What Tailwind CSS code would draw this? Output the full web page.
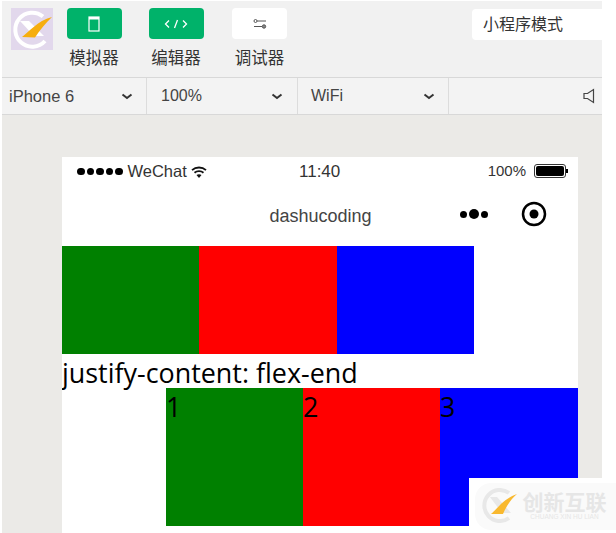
<!DOCTYPE html>
<html>
<head>
<meta charset="utf-8">
<script src="https://cdn.jsdelivr.net/npm/@tailwindcss/browser@4"></script>
</head>
<body class="bg-white">
<div class="relative w-[616px] h-[533px] overflow-hidden bg-white font-['Liberation_Sans','Noto_Sans_CJK_SC',sans-serif]">
  <div class="ml-[2px] mt-[1px] w-[600px] h-[532px] bg-[#ebeae7] flex flex-col">
    <!-- toolbar -->
    <div class="h-[76px] bg-[#f1f1f1] flex items-start shrink-0">
      <div class="ml-[9px] mt-[7px] w-[42px] h-[42px] bg-[#e2d8ec] flex items-center justify-center">
        <svg width="42" height="42" viewBox="0 0 42 42"><path d="M32 8.500 A17 17 0 1 0 34 33" fill="none" stroke="#fff" stroke-width="4"/><path d="M9 13 L18 13 L33 28 L23 28 Z" fill="#fff"/><path d="M11 29 C18 24 26 13 41 9 C34 16 29 22 24 29.500 Z" fill="#f6ae0f"/></svg>
      </div>
      <div class="ml-[13px] mt-[7px] w-[56px] flex flex-col items-center">
        <div class="w-[55px] h-[31px] rounded-[4px] bg-[#00b26a] flex items-center justify-center">
          <svg width="12" height="16" viewBox="0 0 12 16" fill="none"><rect x="1" y="1" width="10" height="14" stroke="#fff" stroke-width="1.200"/><rect x="1" y="1" width="10" height="2.500" fill="#fff"/></svg>
        </div>
        <span class="mt-[7px] text-[16.500px] leading-[24px] text-[#333] whitespace-nowrap">模拟器</span>
      </div>
      <div class="ml-[26px] mt-[7px] w-[56px] flex flex-col items-center">
        <div class="w-[55px] h-[31px] rounded-[4px] bg-[#00b26a] flex items-center justify-center">
          <svg width="24" height="12" viewBox="0 0 24 12" fill="none" stroke="#fff" stroke-width="1.300"><path d="M5 2.500 L1.500 6 L5 9.500"/><path d="M10.500 10 L13.500 2"/><path d="M19 2.500 L22.500 6 L19 9.500"/></svg>
        </div>
        <span class="mt-[7px] text-[16.500px] leading-[24px] text-[#333] whitespace-nowrap">编辑器</span>
      </div>
      <div class="ml-[28px] mt-[7px] w-[55px] flex flex-col items-center">
        <div class="w-[55px] h-[31px] rounded-[4px] bg-white flex items-center justify-center">
          <svg width="14" height="12" viewBox="0 0 14 12" fill="none" stroke="#555" stroke-width="1"><path d="M4 3 H13"/><circle cx="2.500" cy="3" r="1.500"/><path d="M1 8.500 H9"/><circle cx="11" cy="8.500" r="1.700" fill="#888"/></svg>
        </div>
        <span class="mt-[7px] text-[16.500px] leading-[24px] text-[#333] whitespace-nowrap">调试器</span>
      </div>
      <div class="ml-auto mt-[8px] w-[130px] h-[31px] bg-white rounded-l-[4px] pl-[11px] flex items-center text-[16px] text-[#333]">小程序模式</div>
    </div>
    <!-- device bar -->
    <div class="h-[38px] bg-[#f3f3f3] border-t-[1px] border-b-[1px] border-[#d8d8d8] flex items-center text-[16px] text-[#444] shrink-0">
      <div class="w-[145px] h-full border-r-[1px] border-[#dcdcdc] flex items-center justify-between pl-[7px] pr-[13px]">
        <span class="text-[16.500px]">iPhone 6</span>
        <svg width="12" height="7" viewBox="0 0 12 7" fill="none" stroke="#333" stroke-width="2"><path d="M1.500 1.500 L6 5 L10.500 1.500"/></svg>
      </div>
      <div class="w-[151px] h-full border-r-[1px] border-[#dcdcdc] flex items-center justify-between pl-[14px] pr-[14px]">
        <span>100%</span>
        <svg width="12" height="7" viewBox="0 0 12 7" fill="none" stroke="#333" stroke-width="2"><path d="M1.500 1.500 L6 5 L10.500 1.500"/></svg>
      </div>
      <div class="w-[151px] h-full border-r-[1px] border-[#dcdcdc] flex items-center justify-between pl-[13px] pr-[13px]">
        <span>WiFi</span>
        <svg width="12" height="7" viewBox="0 0 12 7" fill="none" stroke="#333" stroke-width="2"><path d="M1.500 1.500 L6 5 L10.500 1.500"/></svg>
      </div>
      <div class="flex-1 h-full flex items-center justify-end pr-[7px]">
        <svg width="12" height="16" viewBox="0 0 12 16" fill="none" stroke="#444" stroke-width="1.200"><path d="M1 5.500 H4.500 L10.500 1.500 V14.500 L4.500 10.500 H1 Z"/></svg>
      </div>
    </div>
    <!-- phone -->
    <div class="ml-[60px] mt-[42px] w-[516px] flex-1 bg-white flex flex-col overflow-hidden">
      <div class="h-[28px] shrink-0 flex items-center justify-between relative pl-[15px] pr-[10px] text-[#333] text-[16px]">
        <div class="flex items-center">
          <span class="flex gap-[2px] mr-[5px] mt-[1px]">
            <i class="w-[7.500px] h-[7.500px] rounded-full bg-black block"></i><i class="w-[7.500px] h-[7.500px] rounded-full bg-black block"></i><i class="w-[7.500px] h-[7.500px] rounded-full bg-black block"></i><i class="w-[7.500px] h-[7.500px] rounded-full bg-black block"></i><i class="w-[7.500px] h-[7.500px] rounded-full bg-black block"></i>
          </span>
          <span class="text-[16.500px] leading-[20px]">WeChat</span>
          <svg class="ml-[4px] mt-[2px]" width="16" height="12" viewBox="0 0 16 12" fill="none" stroke="#111" stroke-width="1.800"><path d="M1 4.200 C5 .6 11 .6 15 4.200"/><path d="M3.500 6.800 C6 4.600 10 4.600 12.500 6.800"/><path d="M8 12 L5.500 9 C7 8 9 8 10.500 9 Z" fill="#111" stroke="none"/></svg>
        </div>
        <span class="absolute left-[237px] mt-[1px] text-[17px]">11:40</span>
        <div class="flex items-center text-[15px]">
          <span class="mr-[1px]">100%</span>
          <span class="ml-[7px] w-[32px] h-[14px] rounded-[3px] border-[1px] border-[#333] p-[1px] block"><span class="block w-full h-full bg-black rounded-[2px]"></span></span>
          <span class="w-[2px] h-[4px] bg-black block"></span>
        </div>
      </div>
      <div class="h-[61px] shrink-0 relative flex items-center justify-center text-[18px] text-[#444]">
        <span class="ml-[1px] mt-[1px]">dashucoding</span>
        <div class="absolute left-[398px] top-[24px] flex items-center gap-[2px]">
          <i class="w-[7px] h-[7px] rounded-full bg-black block"></i><i class="w-[10px] h-[10px] rounded-full bg-black block"></i><i class="w-[7px] h-[7px] rounded-full bg-black block"></i>
        </div>
        <svg class="absolute left-[459px] top-[16px]" width="26" height="26" viewBox="0 0 26 26" fill="none"><circle cx="13" cy="13" r="11" stroke="#000" stroke-width="2.500"/><circle cx="13" cy="13" r="4.500" fill="#000"/></svg>
      </div>
      <div class="flex h-[108px] shrink-0">
        <div class="w-[137px] bg-[#008000]"></div>
        <div class="w-[138px] bg-[#ff0000]"></div>
        <div class="w-[137px] bg-[#0000ff]"></div>
      </div>
      <div class="h-[34px] shrink-0 font-['Open_Sans','Noto_Sans',sans-serif] text-[26.900px] leading-[37px] text-black whitespace-nowrap">justify-content: flex-end</div>
      <div class="flex justify-end h-[138px] shrink-0 font-['Open_Sans','Noto_Sans',sans-serif] text-[26.900px] leading-[37px] text-black">
        <div class="w-[137px] bg-[#008000]">1</div>
        <div class="w-[137px] bg-[#ff0000]">2</div>
        <div class="w-[138px] bg-[#0000ff]">3</div>
      </div>
    </div>
  </div>
  <!-- watermark overlay -->
  <div class="absolute left-[469px] top-[478px] w-[147px] h-[55px] bg-white">
    <div class="ml-[6px] mt-[5px] w-[141px] h-[47px] rounded-l-[16px] bg-[#fafafa] flex items-start">
      <svg class="ml-[7px] mt-[5px]" width="35" height="35" viewBox="0 0 35 35"><path d="M27 5 A15.500 15.500 0 1 0 27 30" fill="none" stroke="#e8e8e8" stroke-width="4"/><path d="M8 9 L15 9 L29 25 L20 25 Z" fill="#e8e8e8"/><path d="M9 26 C15 21 21 11 35 6 C28 12 24 19 21 26 Z" fill="#f9b92f"/></svg>
      <div class="ml-[5px] mt-[9px] w-[85px] flex flex-col items-center text-[#e6e6e6]">
        <span class="text-[21px] leading-[21px] font-semibold whitespace-nowrap">创新互联</span>
        <span class="text-[6.500px] leading-[7px] whitespace-nowrap">CHUANG XIN HU LIAN</span>
      </div>
    </div>
  </div>
</div>
</body>
</html>
